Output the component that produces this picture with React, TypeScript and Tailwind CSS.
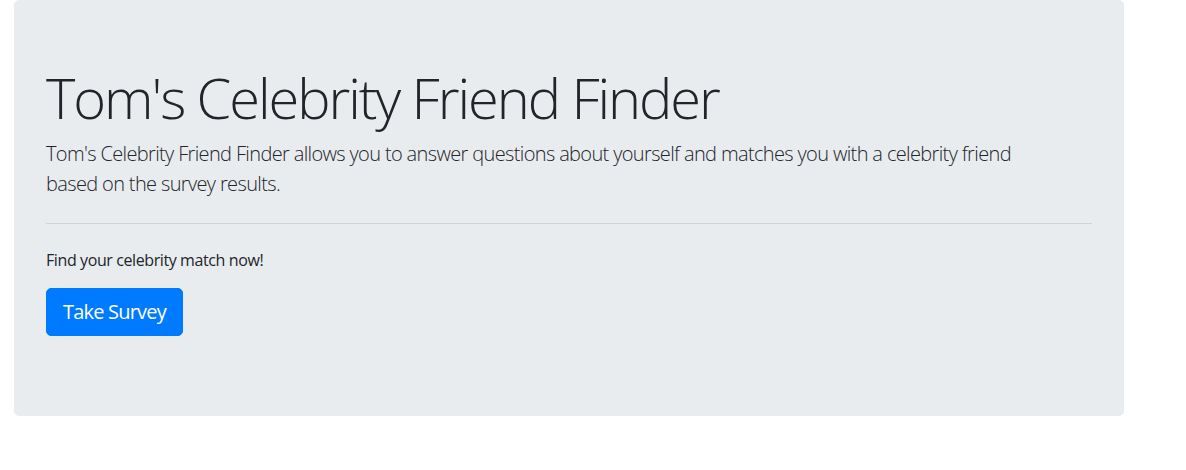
export default function App() {
  return (
    <div className="min-h-[470px] bg-white font-['Segoe_UI','Open_Sans',sans-serif] text-[#212529]">
      {/* Jumbotron */}
      <div className="ml-[14px] w-[1110px] rounded-[5px] bg-[#e9ecef] px-8 py-16">
        <h1 className="mb-2 text-[56px] font-light leading-[1.2] tracking-[-0.037em]">
          Tom's Celebrity Friend Finder
        </h1>
        <p className="text-[20px] font-light leading-[30px] tracking-[-0.032em]">
          Tom's Celebrity Friend Finder allows you to answer questions about
          yourself and matches you with a celebrity friend
          <br />
          based on the survey results.
        </p>

        <hr className="my-6 border-t border-black/10" />

        <p className="mb-4 text-base leading-6 tracking-[-0.025em]">
          Find your celebrity match now!
        </p>

        <p className="mb-4">
          <button className="h-12 rounded-[5px] border border-[#007bff] bg-[#007bff] px-4 text-[20px] leading-[30px] tracking-[-0.04em] text-white hover:bg-[#0069d9]">
            Take Survey
          </button>
        </p>
      </div>
    </div>
  );
}
